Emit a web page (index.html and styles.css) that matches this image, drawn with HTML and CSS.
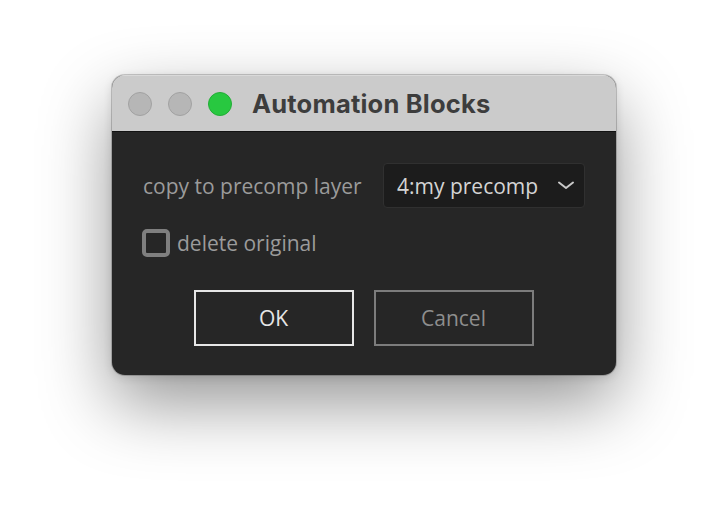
FILE: index.html
```html
<!DOCTYPE html>
<html>
<head>
<meta charset="utf-8">
<link rel="stylesheet" href="styles.css">
</head>
<body>
<div class="stage">
  <div class="window">
    <div class="titlebar">
      <div class="lights">
        <span class="light gray"></span>
        <span class="light gray"></span>
        <span class="light green"></span>
      </div>
      <div class="title">Automation Blocks</div>
    </div>
    <div class="content">
      <div class="row">
        <span class="label">copy to precomp layer</span>
        <div class="select">
          <span class="select-text">4:my precomp</span>
          <svg class="chevron" width="18" height="9" viewBox="0 0 18 9"><path d="M2 1.5 L9 7 L16 1.5" fill="none" stroke="#c8c8c8" stroke-width="2" stroke-linecap="round" stroke-linejoin="round"/></svg>
        </div>
      </div>
      <div class="check-row">
        <span class="checkbox"></span>
        <span class="check-label">delete original</span>
      </div>
      <div class="buttons">
        <div class="btn btn-ok">OK</div>
        <div class="btn btn-cancel">Cancel</div>
      </div>
    </div>
  </div>
</div>
</body>
</html>
```
FILE: styles.css
```css
html, body {
  margin: 0;
  padding: 0;
  background: #ffffff;
}
.stage {
  width: 728px;
  height: 524px;
  display: flex;
  justify-content: center;
  align-items: flex-start;
  padding-top: 75px;
  box-sizing: border-box;
}
.window {
  width: 504px;
  height: 300px;
  border-radius: 13px;
  overflow: hidden;
  background: #262626;
  box-shadow: 0 0 0 1px rgba(0,0,0,0.18), 0 28px 70px rgba(0,0,0,0.42), 0 2px 10px rgba(0,0,0,0.12);
  display: flex;
  flex-direction: column;
  font-family: "Open Sans", "Noto Sans", sans-serif;
}
.titlebar {
  background: #cbcbcb;
  border-top: 1px solid #d9d9d9;
  border-bottom: 1px solid #121212;
  display: flex;
  align-items: center;
  padding-left: 16px;
  flex-shrink: 0;
  height: 55px;
}
.lights {
  display: flex;
  gap: 16px;
}
.light {
  width: 24px;
  height: 24px;
  border-radius: 50%;
  box-sizing: border-box;
}
.light.gray {
  background: #b6b6b6;
  border: 1px solid #a2a2a2;
}
.light.green {
  background: #28c840;
  border: 1px solid #22ad36;
}
.title {
  margin-left: 20px;
  font-family: Inter, "Open Sans", sans-serif;
  font-weight: 700;
  font-size: 25.5px;
  color: #3d3d3d;
  letter-spacing: 0.2px;
}
.content {
  flex: 1;
  padding: 31px 31px 29px 30px;
  display: flex;
  flex-direction: column;
}
.row {
  display: flex;
  align-items: center;
  justify-content: space-between;
}
.label {
  font-size: 21px;
  color: #9b9b9b;
  padding-left: 1px;
}
.select {
  width: 202px;
  height: 45px;
  box-sizing: border-box;
  background: #1c1c1c;
  border: 1px solid #303030;
  border-radius: 4px;
  display: flex;
  align-items: center;
  justify-content: space-between;
  padding: 0 9px 0 13px;
}
.select-text {
  font-size: 21px;
  color: #d4d4d4;
}
.chevron {
  display: block;
}
.check-row {
  margin-top: 21px;
  display: flex;
  align-items: center;
  gap: 7px;
}
.checkbox {
  width: 28px;
  height: 28px;
  box-sizing: border-box;
  border: 4px solid #7f7f7f;
  border-radius: 5px;
}
.check-label {
  font-size: 21px;
  color: #9b9b9b;
}
.buttons {
  margin-top: auto;
  display: flex;
  justify-content: center;
  gap: 20px;
}
.btn {
  width: 160px;
  height: 56px;
  box-sizing: border-box;
  display: flex;
  align-items: center;
  justify-content: center;
  font-size: 21px;
}
.btn-ok {
  border: 2px solid #e6e6e6;
  color: #e6e6e6;
}
.btn-cancel {
  border: 2px solid #7c7c7c;
  color: #8e8e8e;
}
```
